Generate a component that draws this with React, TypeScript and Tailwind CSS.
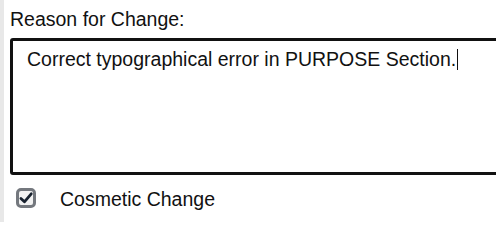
export default function App() {
  return (
    <div className="flex h-[222px] w-[496px] overflow-hidden bg-white font-['Liberation_Sans',Arial,sans-serif] text-[#111]">
      {/* left edge strip */}
      <div className="w-[4px] shrink-0 bg-[#e8e8e8]" />

      <div className="flex min-w-0 flex-1 flex-col pl-[6px] pt-[8px]">
        <label className="text-[19.5px] leading-[22px]">Reason for Change:</label>

        {/* reason text box */}
        <div className="mt-[8px] h-[137px] w-[520px] shrink-0 rounded-[3px] border-[3px] border-[#111] px-[14px] pt-[4px] text-[19.5px] leading-[22px]">
          Correct typographical error in PURPOSE Section.
          <span className="ml-[1px] inline-block h-[21px] w-px translate-y-[4px] bg-[#111] align-baseline" />
        </div>

        {/* checkbox row */}
        <div className="mt-[13px] flex items-center">
          <div className="ml-[6px] flex h-[20px] w-[20px] -translate-y-[1px] items-center justify-center rounded-[5px] border-[3px] border-[#74787e] bg-[#f2f2f2]">
            <svg viewBox="0 0 16 16" className="h-[14px] w-[14px] overflow-visible">
              <path d="M2.2 8.6 L6.2 12.4 L14 3.2" fill="none" stroke="#18222f" strokeWidth="3.2" strokeLinecap="round" strokeLinejoin="round" />
            </svg>
          </div>
          <span className="ml-[24px] text-[19.5px] leading-[22px]">Cosmetic Change</span>
        </div>
      </div>
    </div>
  );
}
